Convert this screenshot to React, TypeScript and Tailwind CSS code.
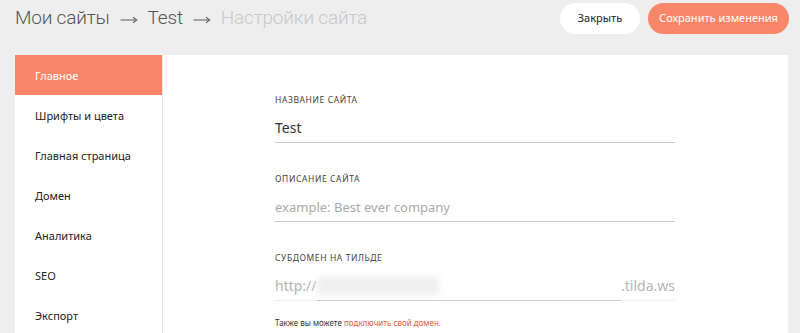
import React from "react";

const items = ["Главное", "Шрифты и цвета", "Главная страница", "Домен", "Аналитика", "SEO", "Экспорт"];

function Arrow() {
  return (
    <svg width="18" height="10" viewBox="0 0 18 10" className="mx-[10px] mt-[3px]">
      <line x1="0.5" y1="5" x2="16.5" y2="5" stroke="#666666" strokeWidth="1.1" />
      <path d="M13 2.2 L16.8 5 L13 7.8" fill="none" stroke="#666666" strokeWidth="1.1" />
    </svg>
  );
}

export default function App() {
  return (
    <div className="w-[800px] h-[333px] overflow-hidden bg-[#eeeeee]" style={{ fontFamily: '"Noto Sans", "Open Sans", sans-serif' }}>
      <div className="flex items-center justify-between h-[36px] pl-[15px] pr-[11px]">
        <div className="flex items-center text-[19px] leading-[24px] tracking-[-0.2px]" style={{ fontFamily: 'Roboto, "Noto Sans", sans-serif', fontWeight: 300 }}>
          <span className="text-[#555555]">Мои сайты</span>
          <Arrow />
          <span className="text-[#555555]">Test</span>
          <Arrow />
          <span className="text-[#c8c8c8]">Настройки сайта</span>
        </div>
        <div className="flex items-center gap-[8px]">
          <button className="w-[80px] h-[31px] rounded-full bg-white text-[11px] text-[#222222]">Закрыть</button>
          <button className="w-[141px] h-[31px] rounded-full bg-[#fa8669] text-[11px] text-white">Сохранить изменения</button>
        </div>
      </div>
      <div className="mt-[19px] ml-[15px] w-[773px] h-[300px] bg-white flex">
        <div className="w-[148px] border-r border-[#e6e6e6] flex flex-col">
          {items.map((it, i) => (
            <div
              key={it}
              className={
                i === 0
                  ? "h-[40px] flex items-center pl-[20px] pt-[2px] text-[11px] bg-[#fa8669] text-white"
                  : "h-[40px] flex items-center pl-[20px] pt-[3px] text-[11px] text-[#222222]"
              }
            >
              {it}
            </div>
          ))}
        </div>
        <div className="flex-1 flex justify-center">
          <div className="w-[400px] pt-[37px] -ml-[1px]">
            <div className="text-[8.5px] leading-[16px] tracking-[0.6px] text-[#444444] uppercase">Название сайта</div>
            <div className="pt-[10px] pb-[4px] leading-[20px] text-[14px] text-[#333333] border-b border-[#cccccc]">Test</div>

            <div className="mt-[28px] text-[8.5px] leading-[16px] tracking-[0.6px] text-[#444444] uppercase">Описание сайта</div>
            <div className="pt-[10px] pb-[4px] leading-[20px] text-[13px] text-[#aaaaaa] border-b border-[#cccccc]">example: Best ever company</div>

            <div className="mt-[28px] text-[8.5px] leading-[16px] tracking-[0.6px] text-[#444444] uppercase">Субдомен на тильде</div>
            <div className="flex items-end border-b border-[#efefef] text-[14px] leading-[20px] text-[#b5b5b5]">
              <span className="pt-[10px] pb-[4px] w-[43px]">http://</span>
              <div className="w-[309px] h-[34px] border-b border-[#cccccc] -mb-px flex items-center">
                <div className="w-[122px] h-[18px] mt-[4px] bg-[#efefef] blur-[3px]" />
              </div>
              <span className="flex-1 text-right pt-[10px] pb-[4px]">.tilda.ws</span>
            </div>

            <div className="mt-[16px] text-[8px] leading-[12px] text-[#333333]">
              Также вы можете <span className="text-[#e8553e]">подключить свой домен.</span>
            </div>
          </div>
        </div>
      </div>
    </div>
  );
}
